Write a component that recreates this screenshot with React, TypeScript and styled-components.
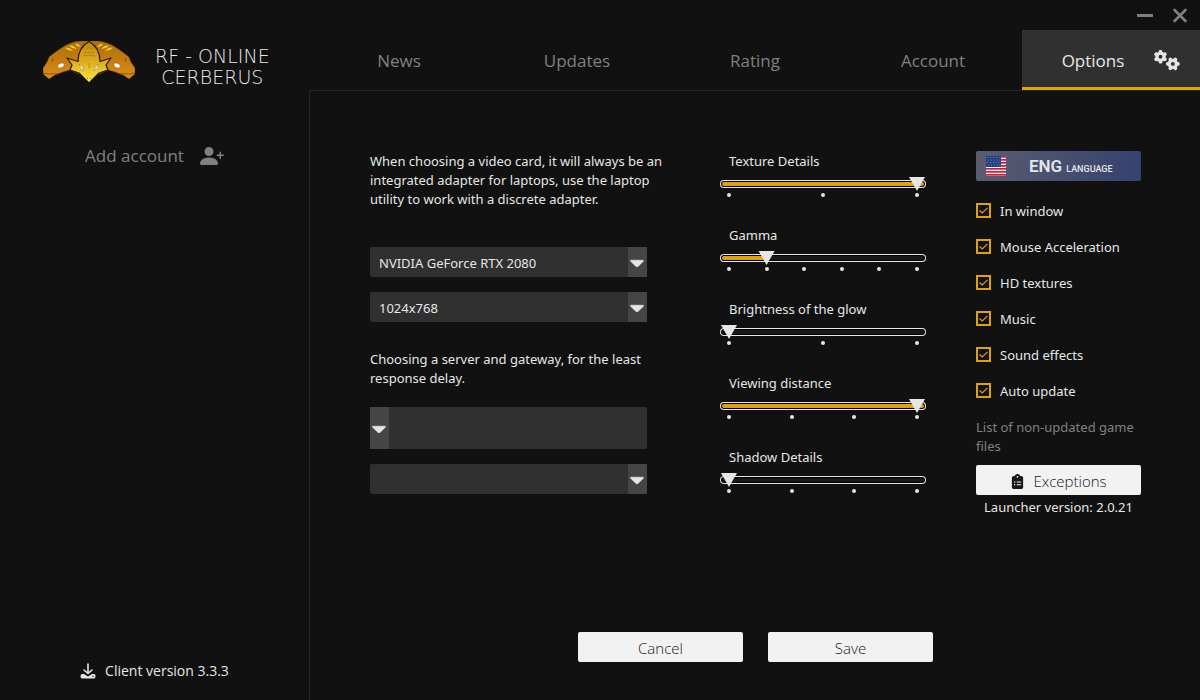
import React, { useState } from "react";
import styled, { createGlobalStyle } from "styled-components";
import { BsPersonPlusFill } from "react-icons/bs";
import { FaClipboardList, FaGears } from "react-icons/fa6";

const gold = "#e0a10a";
const ink = "#e6e6e6";
const muted = "#808080";
const panel = "#303030";

const GlobalStyle = createGlobalStyle`
  *, *::before, *::after { box-sizing: border-box; }
  html, body { margin: 0; background: #111111; }
  body {
    color: ${ink};
    font: 400 13px/19px "Noto Sans", "Open Sans", sans-serif;
  }
  button, select, input { font: inherit; color: inherit; }
  button { border: 0; padding: 0; background: none; cursor: pointer; }
`;

const Launcher = styled.div`
  display: grid;
  grid-template-columns: 309px minmax(0, 1fr);
  min-height: 100vh;
`;

const Sidebar = styled.aside`
  display: flex;
  flex-direction: column;
`;

const Brand = styled.a`
  display: flex;
  align-items: flex-start;
  gap: 20px;
  padding: 41px 0 0 43px;
  color: ${ink};
  text-decoration: none;
`;

const BrandName = styled.span`
  margin-top: 5px;
  font: 200 19px/21px "DejaVu Sans", sans-serif;
  text-align: center;
  white-space: nowrap;
`;

const AddAccount = styled.button`
  display: flex;
  align-items: center;
  align-self: center;
  gap: 16px;
  margin-top: 56px;
  color: ${muted};
  font-family: "Open Sans", sans-serif;
  font-size: 17px;
  line-height: 24px;
`;

const ClientVersion = styled.p`
  display: flex;
  align-items: center;
  align-self: center;
  gap: 9px;
  margin: auto 0 19px;
  font-family: "Open Sans", sans-serif;
  font-size: 14px;
  line-height: 20px;
`;

const Main = styled.div`
  display: flex;
  flex-direction: column;
`;

const WindowBar = styled.div`
  display: flex;
  justify-content: flex-end;
  gap: 19px;
  height: 30px;
  padding: 7px 12px 0 0;
`;

const WindowButton = styled.button`
  display: flex;
  width: 16px;
  height: 16px;
  color: ${muted};
`;

const Nav = styled.nav`
  display: grid;
  grid-template-columns: repeat(5, 1fr);
  padding-left: 1px;
  height: 60px;
`;

const NavLink = styled.a<{ $active?: boolean }>`
  display: flex;
  align-items: center;
  justify-content: center;
  gap: 30px;
  padding-top: ${(p) => (p.$active ? "3px" : "0")};
  padding-left: ${(p) => (p.$active ? "20px" : "0")};
  background: ${(p) => (p.$active ? panel : "transparent")};
  border-bottom: ${(p) => (p.$active ? `3px solid ${gold}` : "0")};
  color: ${(p) => (p.$active ? ink : muted)};
  font-family: "Open Sans", sans-serif;
  font-size: 17px;
  text-decoration: none;
`;

const Content = styled.main`
  flex: 1;
  display: flex;
  flex-direction: column;
  justify-content: space-between;
  padding: 61px 59px 38px 60px;
  border-top: 1px solid #262626;
  border-left: 1px solid #262626;
`;

const Columns = styled.div`
  display: grid;
  grid-template-columns: minmax(300px, 1fr) 206px 165px;
  column-gap: 50px;
  align-items: start;
`;

const Note = styled.p`
  max-width: 300px;
  margin: 0;
`;

const SelectStack = styled.div<{ $top: number; $bottom?: number }>`
  display: flex;
  flex-direction: column;
  gap: 15px;
  max-width: 277px;
  margin-top: ${(p) => p.$top}px;
  margin-bottom: ${(p) => p.$bottom ?? 0}px;
`;

const SelectBox = styled.div<{ $tall?: boolean }>`
  position: relative;
  height: ${(p) => (p.$tall ? 42 : 30)}px;
  border-radius: 2px;
  background: ${panel};
`;

const Select = styled.select`
  appearance: none;
  display: block;
  width: 100%;
  height: 100%;
  padding: 2px 28px 0 9px;
  border: 0;
  border-radius: 2px;
  background: transparent;
  option { background: ${panel}; }
`;

const SelectArrow = styled.span<{ $left?: boolean }>`
  position: absolute;
  top: 0;
  bottom: 0;
  ${(p) => (p.$left ? "left: 0;" : "right: 0;")}
  width: 19px;
  display: flex;
  align-items: center;
  justify-content: center;
  padding: 3px 1px 0 0;
  background: #454545;
  pointer-events: none;
`;

const Sliders = styled.div`
  display: flex;
  flex-direction: column;
  gap: 29px;
`;

const SliderField = styled.div`
  display: flex;
  flex-direction: column;
  height: 45px;
`;

const SliderLabel = styled.label`
  margin-bottom: 9px;
  padding-left: 9px;
`;

const Range = styled.input`
  appearance: none;
  display: block;
  width: 100%;
  height: 8px;
  margin: 0;
  background: transparent;

  &::-webkit-slider-runnable-track {
    height: 8px;
    border-radius: 4px;
    background: linear-gradient(to right, ${gold} var(--fill), #181818 var(--fill));
    box-shadow: inset 0 0 0 1px ${ink}, inset 0 0 0 2px #000000;
  }

  &::-webkit-slider-thumb {
    appearance: none;
    width: 18px;
    height: 14px;
    margin-top: -3px;
    background: ${ink};
    clip-path: polygon(1px 0, 17px 0, 9px 14px);
  }
`;

const Ticks = styled.div`
  display: flex;
  justify-content: space-between;
  margin-top: 5px;
  padding: 0 7px;
`;

const Tick = styled.span`
  width: 4px;
  height: 4px;
  border-radius: 2px;
  background: ${ink};
`;

const Side = styled.div`
  display: flex;
  flex-direction: column;
  margin-top: -1px;
`;

const LanguageButton = styled.button`
  display: flex;
  align-items: center;
  height: 30px;
  padding-left: 10px;
  border-radius: 2px;
  background: linear-gradient(100deg, #5b5d70, #34426f);
  font-family: Roboto, sans-serif;
  font-weight: 600;
`;

const LanguageText = styled.span`
  display: flex;
  align-items: baseline;
  gap: 4px;
  margin-left: 23px;
  padding-top: 3px;
  font-size: 17px;
  small { font-size: 9px; font-weight: 500; }
`;

const Checks = styled.div`
  display: flex;
  flex-direction: column;
  gap: 17px;
  margin: 21px 0 17px;
`;

const CheckLabel = styled.label`
  display: flex;
  align-items: center;
  gap: 9px;
`;

const CheckFrame = styled.span`
  display: grid;
  width: 15px;
  height: 15px;
  margin-bottom: 2px;
  > * { grid-area: 1 / 1; }
  svg { pointer-events: none; }
  input:not(:checked) + svg { visibility: hidden; }
`;

const CheckInput = styled.input`
  appearance: none;
  width: 15px;
  height: 15px;
  margin: 0;
  border: 2px solid ${gold};
`;

const Hint = styled.p`
  margin: 0 0 9px;
  color: ${muted};
`;

const LightButton = styled.button`
  display: flex;
  align-items: center;
  justify-content: center;
  gap: 8px;
  width: 165px;
  height: 30px;
  padding-top: 2px;
  border-radius: 2px;
  background: #f2f2f2;
  color: #181818;
  font-family: "Open Sans", sans-serif;
  font-size: 15px;
  font-weight: 300;
`;

const LauncherVersion = styled.p`
  margin: 3px 0 0;
  text-align: center;
`;

const Actions = styled.div`
  display: flex;
  justify-content: center;
  gap: 25px;
`;

function Logo() {
  return (
    <svg width="92" height="44" viewBox="0 0 92 44" aria-hidden="true">
      <defs>
        <linearGradient id="hood" x1="0" y1="0" x2="0" y2="1">
          <stop offset="0" stopColor="#a87208" />
          <stop offset="0.5" stopColor="#c47c10" />
          <stop offset="1" stopColor="#de8e18" />
        </linearGradient>
        <linearGradient id="face" x1="0" y1="0" x2="0" y2="1">
          <stop offset="0" stopColor="#c08a10" />
          <stop offset="0.5" stopColor="#deae1e" />
          <stop offset="1" stopColor="#ffec48" />
        </linearGradient>
      </defs>
      <g id="side-head">
        <path d="M46 0C38 -1 29 1 23 4C18 7 12 11 6 16L4 21L0 27V33L6 38L12 34L20 31L27 29L36 33L46 30Z" fill="url(#hood)" stroke="#5d3406" strokeWidth="0.5" strokeLinejoin="round" />
        <path d="M22 7Q26 5 30 10Q26 10 22 7ZM26 5Q30 3 34 8Q30 8 26 5ZM32 3Q35 2 38 6Q34 6 32 3Z" fill="#f0cf30" />
        <path d="M0 32C6 34 10 32 15 33M10 17L9 21" fill="none" stroke="#7c470a" strokeWidth="0.8" />
        <ellipse cx="18" cy="24.5" rx="3.4" ry="2.2" transform="rotate(-25 18 24.5)" fill="#ffffff" stroke="#70420a" strokeWidth="0.4" />
      </g>
      <use href="#side-head" transform="translate(92 0) scale(-1 1)" />
      <path d="M46 0.6C40 4 35 11 35 20.5L24 17L29 24L27 29L36 32L41 37L46 42L51 37L56 32L65 29L63 24L68 17L57 20.5C57 11 52 4 46 0.6Z" fill="url(#face)" stroke="#241503" strokeWidth="1.2" strokeLinejoin="round" />
      <path d="M42 8Q46 5 50 8M41 11.5H51M40 15Q46 13 52 15M46 22V27" fill="none" stroke="#a87412" strokeWidth="0.7" />
      <path d="M36.5 23.5Q41 26 40.5 29.5Q37 28.5 36.5 23.5ZM55.5 23.5Q51 26 51.5 29.5Q55 28.5 55.5 23.5Z" fill="#ffffff" stroke="#70420a" strokeWidth="0.4" />
      <path d="M44 37L45 38M48 37L47 38" stroke="#70420a" strokeWidth="0.8" />
    </svg>
  );
}

function DownloadIcon() {
  return (
    <svg width="16" height="16" viewBox="0 0 16 16" aria-hidden="true">
      <path d="M8 1V10M4 7L8 10.5L12 7" fill="none" stroke={ink} strokeWidth="1.6" strokeLinecap="round" strokeLinejoin="round" />
      <path d="M2 11H4L8 13.4L12 11H14Q15.5 11 15.5 13Q15.5 15.5 14 15.5H2Q.5 15.5 .5 13.5Q.5 11 2 11Z" fill={ink} />
      <circle cx="13" cy="13.2" r="0.7" fill="#111111" />
    </svg>
  );
}

function Flag() {
  return (
    <svg width="20" height="20" viewBox="0 0 20 20" aria-hidden="true">
      <rect width="20" height="20" fill="#f3eff2" />
      {[0, 3, 6, 9, 12, 15, 18].map((y) => (
        <rect key={y} y={y} width="20" height="1.7" fill="#c8203f" />
      ))}
      <rect width="15" height="11" fill="#23427f" />
      {[1.5, 4, 6.5, 9].map((y, row) =>
        [1.5, 4.5, 7.5, 10.5, 13].map((x) => (
          <circle key={`${x}-${y}`} cx={x + (row % 2 ? 0.8 : 0)} cy={y} r="0.5" fill="#7f95c2" />
        )),
      )}
    </svg>
  );
}

interface DropdownProps {
  label: string;
  options: string[];
  tall?: boolean;
  arrowLeft?: boolean;
}

function Dropdown({ label, options, tall, arrowLeft }: DropdownProps) {
  return (
    <SelectBox $tall={tall}>
      <Select aria-label={label}>
        {options.map((option) => (
          <option key={option}>{option}</option>
        ))}
      </Select>
      <SelectArrow $left={arrowLeft}>
        <svg width="16" height="9" viewBox="0 0 16 9" aria-hidden="true">
          <path d="M1.8 1.2H14.2Q15 1.4 14.2 2.4L9 7.4Q8 8.2 7 7.4L1.8 2.4Q1 1.4 1.8 1.2Z" fill={ink} stroke={ink} strokeWidth="0.6" strokeLinejoin="round" />
        </svg>
      </SelectArrow>
    </SelectBox>
  );
}

function Slider({ label, steps, initial }: { label: string; steps: number; initial: number }) {
  const [value, setValue] = useState(initial);
  const id = label.toLowerCase().replace(/ /g, "-");
  const ratio = value / (steps - 1);
  const fill = ratio === 0 ? "0%" : ratio === 1 ? "100%" : `calc(9px + (100% - 18px) * ${ratio})`;
  return (
    <SliderField>
      <SliderLabel htmlFor={id}>{label}</SliderLabel>
      <Range
        id={id}
        type="range"
        min={0}
        max={steps - 1}
        value={value}
        onChange={(e) => setValue(Number(e.target.value))}
        style={{ "--fill": fill } as React.CSSProperties}
      />
      <Ticks>
        {Array.from({ length: steps }, (_, i) => (
          <Tick key={i} />
        ))}
      </Ticks>
    </SliderField>
  );
}

function Check({ label }: { label: string }) {
  return (
    <CheckLabel>
      <CheckFrame>
        <CheckInput type="checkbox" defaultChecked />
        <svg width="15" height="15" viewBox="0 0 15 15" aria-hidden="true">
          <path d="M3.5 7.5L6.3 10L11.5 4.8" fill="none" stroke={gold} strokeWidth="1.2" />
        </svg>
      </CheckFrame>
      {label}
    </CheckLabel>
  );
}

const sliders = [
  { label: "Texture Details", steps: 3, initial: 2 },
  { label: "Gamma", steps: 6, initial: 1 },
  { label: "Brightness of the glow", steps: 3, initial: 0 },
  { label: "Viewing distance", steps: 4, initial: 3 },
  { label: "Shadow Details", steps: 4, initial: 0 },
];

const checks = ["In window", "Mouse Acceleration", "HD textures", "Music", "Sound effects", "Auto update"];

export default function App() {
  return (
    <>
      <GlobalStyle />
      <Launcher>
        <Sidebar>
          <Brand href="#home">
            <Logo />
            <BrandName>
              RF - ONLINE
              <br />
              CERBERUS
            </BrandName>
          </Brand>
          <AddAccount type="button">
            Add account
            <BsPersonPlusFill size={24} />
          </AddAccount>
          <ClientVersion>
            <DownloadIcon />
            Client version 3.3.3
          </ClientVersion>
        </Sidebar>
        <Main>
          <WindowBar>
            <WindowButton type="button" aria-label="Minimize">
              <svg width="16" height="16" viewBox="0 0 16 16">
                <path d="M1 8.5H15" stroke="currentColor" strokeWidth="3" strokeLinecap="round" />
              </svg>
            </WindowButton>
            <WindowButton type="button" aria-label="Close">
              <svg width="16" height="16" viewBox="0 0 16 16">
                <path d="M2.5 3L13.5 14M13.5 3L2.5 14" stroke="currentColor" strokeWidth="2.6" strokeLinecap="round" />
              </svg>
            </WindowButton>
          </WindowBar>
          <Nav>
            {["News", "Updates", "Rating", "Account"].map((name) => (
              <NavLink key={name} href={`#${name.toLowerCase()}`}>
                {name}
              </NavLink>
            ))}
            <NavLink href="#options" $active>
              Options
              <FaGears size={26} />
            </NavLink>
          </Nav>
          <Content>
            <Columns>
              <div>
                <Note>
                  When choosing a video card, it will always be an integrated adapter for laptops, use the laptop
                  utility to work with a discrete adapter.
                </Note>
                <SelectStack $top={38} $bottom={28}>
                  <Dropdown label="Video card" options={["NVIDIA GeForce RTX 2080"]} />
                  <Dropdown label="Resolution" options={["1024x768"]} />
                </SelectStack>
                <Note>Choosing a server and gateway, for the least response delay.</Note>
                <SelectStack $top={19}>
                  <Dropdown label="Server" options={[""]} tall arrowLeft />
                  <Dropdown label="Gateway" options={[""]} />
                </SelectStack>
              </div>
              <Sliders>
                {sliders.map((s) => (
                  <Slider key={s.label} {...s} />
                ))}
              </Sliders>
              <Side>
                <LanguageButton type="button">
                  <Flag />
                  <LanguageText>
                    ENG <small>LANGUAGE</small>
                  </LanguageText>
                </LanguageButton>
                <Checks>
                  {checks.map((label) => (
                    <Check key={label} label={label} />
                  ))}
                </Checks>
                <Hint>List of non-updated game files</Hint>
                <LightButton type="button">
                  <FaClipboardList size={15} />
                  Exceptions
                </LightButton>
                <LauncherVersion>Launcher version: 2.0.21</LauncherVersion>
              </Side>
            </Columns>
            <Actions>
              <LightButton type="button">Cancel</LightButton>
              <LightButton type="button">Save</LightButton>
            </Actions>
          </Content>
        </Main>
      </Launcher>
    </>
  );
}
